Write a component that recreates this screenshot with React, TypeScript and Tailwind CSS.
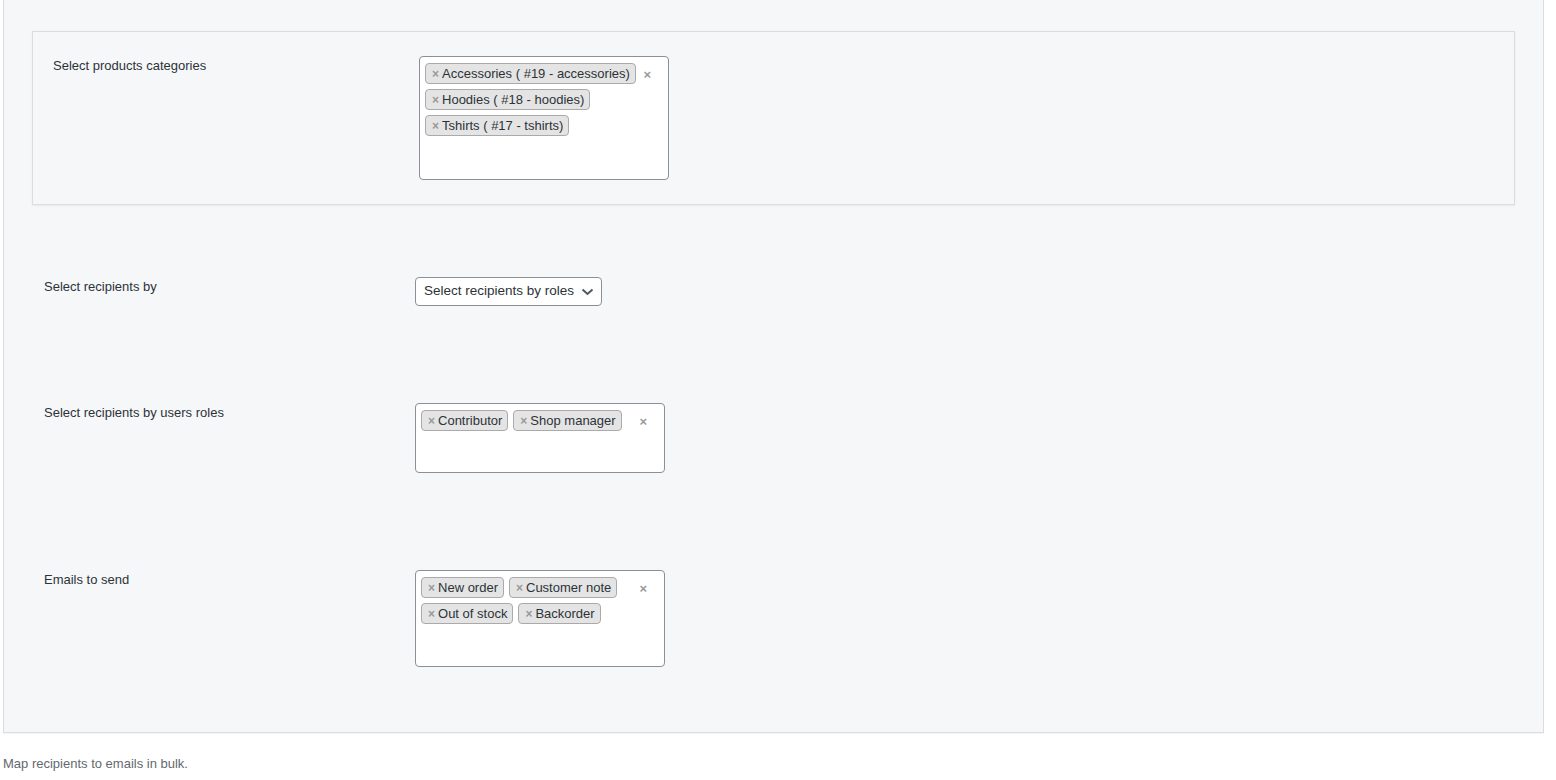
import React from 'react';

type ChipBoxProps = {
  items: string[];
  height: string;
};

function Chip({ label }: { label: string }) {
  return (
    <li className="flex h-[21px] items-center rounded-[4px] border border-[#aaaaaa] bg-[#e4e4e4] pl-[6px] pr-[5px] text-[13px] leading-none text-[#2c3338]">
      <span className="mr-[3px] text-[12px] font-bold text-[#999999]">×</span>
      <span>{label}</span>
    </li>
  );
}

function ChipBox({ items, height }: ChipBoxProps) {
  return (
    <div className={`relative w-[250px] ${height} rounded-[4px] border border-[#8c8f94] bg-white`}>
      <ul className="flex flex-wrap gap-x-[5px] gap-y-[5px] pl-[5px] pr-[30px] pt-[6px]">
        {items.map((item) => (
          <Chip key={item} label={item} />
        ))}
      </ul>
      <span className="absolute right-[17px] top-[8px] text-[13px] font-bold text-[#999999]">×</span>
    </div>
  );
}

function Label({ children }: { children: React.ReactNode }) {
  return <div className="text-[13px] leading-[19px] text-[#2c3338]">{children}</div>;
}

export default function App() {
  return (
    <div className="min-h-screen bg-white font-['Liberation_Sans',Arial,sans-serif]">
      <div className="ml-[3px] mr-[12px] border-x border-b border-[#dcdcde] bg-[#f6f7f9] px-[28px] pb-[65px] pt-[31px] shadow-[0_1px_1px_rgba(0,0,0,0.04)]">
        <div className="flex border border-[#dcdcde] bg-[#f6f7f9] py-[24px] pl-[20px] shadow-[0_1px_2px_rgba(0,0,0,0.06)]">
          <div className="w-[366px]">
            <Label>Select products categories</Label>
          </div>
          <ChipBox
            height="h-[124px]"
            items={['Accessories ( #19 - accessories)', 'Hoodies ( #18 - hoodies)', 'Tshirts ( #17 - tshirts)']}
          />
        </div>

        <div className="-ml-[28px] mt-[72px] flex pl-[40px]">
          <div className="w-[371px]">
            <Label>Select recipients by</Label>
          </div>
          <button className="flex h-[29px] w-[187px] items-center rounded-[4px] border border-[#8c8f94] bg-white pl-[8px] pr-[7px] text-[13.5px] text-[#2c3338]">
            <span>Select recipients by roles</span>
            <svg className="ml-auto" width="13" height="8" viewBox="0 0 13 8" fill="none">
              <path d="M1.5 1.5 L6.5 6 L11.5 1.5" stroke="#50575e" strokeWidth="2" />
            </svg>
          </button>
        </div>

        <div className="-ml-[28px] mt-[97px] flex pl-[40px]">
          <div className="w-[371px]">
            <Label>Select recipients by users roles</Label>
          </div>
          <ChipBox height="h-[70px]" items={['Contributor', 'Shop manager']} />
        </div>

        <div className="-ml-[28px] mt-[97px] flex pl-[40px]">
          <div className="w-[371px]">
            <Label>Emails to send</Label>
          </div>
          <ChipBox height="h-[97px]" items={['New order', 'Customer note', 'Out of stock', 'Backorder']} />
        </div>
      </div>
      <p className="ml-[3px] mt-[21px] text-[13px] leading-[19px] text-[#646970]">Map recipients to emails in bulk.</p>
    </div>
  );
}
